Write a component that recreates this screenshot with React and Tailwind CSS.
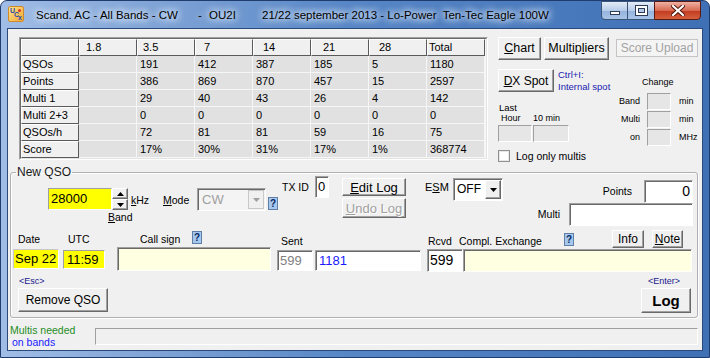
import React from 'react';

const raised = 'bg-[#f0f0f0] border border-t-white border-l-white border-r-[#696969] border-b-[#696969] shadow-[inset_-1px_-1px_0_#a0a0a0]';
const sunken = 'border border-t-[#a0a0a0] border-l-[#a0a0a0] border-r-white border-b-white shadow-[inset_1px_1px_0_#696969]';
const lite = 'bg-[#e6e6e6] border border-t-[#a0a0a0] border-l-[#a0a0a0] border-r-white border-b-white';

const Help = ({ className = '' }) => (
  <div className={`w-[10px] h-[13px] bg-[#a6c8ee] border border-[#5f7fa6] flex items-center justify-center text-[10px] font-bold leading-none text-[#0b2a5e] ${className}`}>?</div>
);

const Down = ({ color = '#000' }) => (
  <svg width="7" height="4" viewBox="0 0 7 4"><path d="M0 0h7L3.5 4z" fill={color} /></svg>
);

const Up = () => (
  <svg width="7" height="4" viewBox="0 0 7 4"><path d="M0 4h7L3.5 0z" fill="#000" /></svg>
);

const header = ['', '1.8', '3.5', '7', '14', '21', '28', 'Total'];
const headPad = [0, 6, 5, 8, 9, 11, 9, 1];
const rows = [
  ['QSOs', '', '191', '412', '387', '185', '5', '1180'],
  ['Points', '', '386', '869', '870', '457', '15', '2597'],
  ['Multi 1', '', '29', '40', '43', '26', '4', '142'],
  ['Multi 2+3', '', '0', '0', '0', '0', '0', '0'],
  ['QSOs/h', '', '72', '81', '81', '59', '16', '75'],
  ['Score', '', '17%', '30%', '31%', '17%', '1%', '368774'],
];

const fixedCell = 'w-[58px] h-[17px] shrink-0 bg-[#f0f0f0] border border-t-white border-l-white border-r-[#5a5a5a] border-b-[#5a5a5a] flex items-center';
const dataCell = 'w-[58px] h-[17px] shrink-0 bg-[#e1e1e1] border-r border-b border-r-[#f6f6f6] border-b-[#f6f6f6] flex items-center pl-[3px]';

function ScoreTable() {
  return (
    <div className="ml-[11px] mt-[8px] w-[469px] h-[123px] border border-t-[#a0a0a0] border-l-[#a0a0a0] border-r-white border-b-white">
      <div className="w-full h-full border border-t-[#696969] border-l-[#696969] border-r-[#e3e3e3] border-b-[#e3e3e3] bg-[#f7f7f7] text-[11px] leading-none">
        <div className="flex">
          {header.map((h, i) => (
            <div key={i} className={fixedCell} style={{ paddingLeft: headPad[i] }}>{h}</div>
          ))}
        </div>
        {rows.map((r) => (
          <div key={r[0]} className="flex">
            <div className={`${fixedCell} pl-[1px]`}>{r[0]}</div>
            {r.slice(1).map((v, i) => (
              <div key={i} className={dataCell}>{v}</div>
            ))}
          </div>
        ))}
      </div>
    </div>
  );
}

function RightPanel() {
  return (
    <div className="ml-[10px] mt-[8px] w-[202px]">
      <div className="flex items-start h-[23px]">
        <div className={`${raised} w-[43px] h-[23px] flex items-center justify-center text-[12.5px]`}><span><u>C</u>hart</span></div>
        <div className={`${raised} ml-[3px] w-[65px] h-[23px] flex items-center justify-center text-[12.5px]`}><span>Multip<u>l</u>iers</span></div>
        <div className="ml-[7px] mt-[2px] w-[82px] h-[18px] border border-[#c4c4c4] bg-[#f4f4f4] flex items-center justify-center text-[12px] text-[#a3a3a3]">Score Upload</div>
      </div>
      <div className="flex">
        <div className="w-[120px]">
          <div className="mt-[9px] flex items-start">
            <div className={`${raised} w-[56px] h-[23px] flex items-center justify-center text-[12px]`}><span><u>D</u>X Spot</span></div>
            <div className="ml-[4px] text-[9.5px] leading-[12px] text-[#1c1cb0] whitespace-nowrap">
              <div>Ctrl+I:</div>
              <div>Internal spot</div>
            </div>
          </div>
          <div className="mt-[10px] pl-[1px] text-[9.5px] leading-[10px]">Last</div>
          <div className="flex text-[9px] leading-[10px]">
            <div className="pl-[3px] w-[35px]">Hour</div>
            <div>10 min</div>
          </div>
          <div className="mt-[2px] flex gap-[1px]">
            <div className={`${lite} w-[34px] h-[17px]`} />
            <div className={`${lite} w-[36px] h-[17px]`} />
          </div>
          <div className="mt-[8px] flex items-center">
            <div className="w-[12px] h-[12px] bg-white border border-[#8e8f8f] shadow-[inset_0_0_0_1px_#e8e8e8]" />
            <div className="ml-[6px] text-[10.5px] leading-[12px] whitespace-nowrap">Log only multis</div>
          </div>
        </div>
        <div className="w-[82px]">
          <div className="mt-[17px] pl-[24px] text-[9px] leading-[11px]">Change</div>
          <div className="mt-[5px] flex flex-col gap-[1px] text-[9px]">
            {[['Band', 'min'], ['Multi', 'min'], ['on', 'MHz']].map(([l, u]) => (
              <div key={l} className="flex items-center h-[17px]">
                <div className="w-[22px] text-right">{l}</div>
                <div className={`${lite} ml-[7px] w-[24px] h-[17px]`} />
                <div className="ml-[8px]">{u}</div>
              </div>
            ))}
          </div>
        </div>
      </div>
    </div>
  );
}

function NewQso() {
  return (
    <fieldset className="ml-[2px] mt-[5px] w-[688px] h-[151px] border border-[#b0b0b0] rounded-[3px] shadow-[inset_1px_1px_0_#fff,1px_1px_0_#fff]">
      <legend className="ml-[5px] px-[1px] text-[12px] leading-[10px] text-[#1a1a1a]">New QSO</legend>
      <div className="flex flex-col h-[140px] text-[10.5px] leading-[13px]">
        {/* row A */}
        <div className="flex items-start h-[50px] shrink-0">
          <div className="ml-[37px] mt-[11px] w-[115px] flex flex-col">
            <div className="flex items-start">
              <div className="w-[64px] h-[22px] bg-[#ffff00] border border-t-[#a0a0a0] border-l-[#a0a0a0] border-r-white border-b-white text-[13px] leading-none pt-[3px] pl-[2px]">28000</div>
              <div className="w-[16px] h-[22px] flex flex-col">
                <div className={`${raised} h-[11px] flex items-center justify-center`}><Up /></div>
                <div className={`${raised} h-[11px] flex items-center justify-center`}><Down /></div>
              </div>
              <div className="ml-[3px] mt-[6px]"><u>k</u>Hz</div>
            </div>
            <div className="ml-[60px] mt-[1px]"><u>B</u>and</div>
          </div>
          <div className="mt-[17px] w-[34px]"><u>M</u>ode</div>
          <div className={`${sunken} mt-[11px] w-[69px] h-[23px] bg-[#f4f4f4] flex items-center`}>
            <div className="flex-1 pl-[4px] text-[13px] text-[#a0a0a0]">CW</div>
            <div className="w-[16px] h-[19px] mr-[1px] border border-[#c8c8c8] bg-[#f0f0f0] flex items-center justify-center"><Down color="#a0a0a0" /></div>
          </div>
          <Help className="ml-[2px] mt-[20px]" />
          <div className="ml-[4px] mt-[4px] w-[33px] whitespace-nowrap">TX ID</div>
          <div className={`${sunken} -mt-[1px] w-[14px] h-[22px] bg-white text-[13px] leading-none pt-[3px] pl-[2px]`}>0</div>
          <div className="ml-[13px] w-[64px] flex flex-col text-[13px]">
            <div className={`${raised} mt-[1px] h-[18px] flex items-center justify-center`}><span><u>E</u>dit Log</span></div>
            <div className={`${raised} mt-[2px] h-[20px] flex items-center justify-center text-[#a0a0a0] [text-shadow:1px_1px_0_#fff]`}><span><u>U</u>ndo Log</span></div>
          </div>
          <div className="ml-[19px] mt-[4px] w-[28px] text-[11px]">E<u>S</u>M</div>
          <div className={`${sunken} mt-[1px] w-[50px] h-[23px] bg-white flex items-center`}>
            <div className="flex-1 pl-[3px] text-[12px]">OFF</div>
            <div className={`${raised} w-[16px] h-[19px] mr-[1px] flex items-center justify-center`}><Down /></div>
          </div>
          <div className="ml-auto mr-[4px] mt-[3px] flex flex-col items-end">
            <div className="flex items-center">
              <div>Points</div>
              <div className={`${sunken} ml-[12px] w-[49px] h-[23px] bg-white text-right pr-[2px] text-[14px] leading-[20px]`}>0</div>
            </div>
            <div className="flex items-center">
              <div>Multi</div>
              <div className={`${sunken} ml-[9px] w-[124px] h-[23px] bg-white`} />
            </div>
          </div>
        </div>

        {/* row B */}
        <div className="flex items-start h-[45px] shrink-0">
          <div className="ml-[2px] w-[46px]">
            <div className="mt-[6px] pl-[5px]">Date</div>
            <div className="mt-[3px] h-[20px] bg-[#ffff00] border border-t-[#c8c8c8] border-l-[#c8c8c8] border-r-white border-b-white text-[13px] leading-[18px] pl-[1px]">Sep 22</div>
          </div>
          <div className="ml-[4px] w-[42px]">
            <div className="mt-[6px] pl-[5px]">UTC</div>
            <div className="mt-[4px] h-[19px] bg-[#ffff00] border border-t-[#a0a0a0] border-l-[#a0a0a0] border-r-white border-b-white text-[13px] leading-[18px] pl-[3px]">11:59</div>
          </div>
          <div className="ml-[12px] w-[154px]">
            <div className="mt-[4px] flex items-start h-[13px]">
              <div className="w-[75px] pl-[23px] mt-[2px] whitespace-nowrap">Call sign</div>
              <Help />
            </div>
            <div className={`${sunken} mt-[3px] h-[24px] bg-[#ffffe1]`} />
          </div>
          <div className="ml-[6px]">
            <div className="mt-[8px] pl-[4px]">Sent</div>
            <div className="mt-[2px] flex">
              <div className={`${sunken} w-[36px] h-[21px] bg-white text-[13px] leading-[19px] pl-[2px] text-[#808080]`}>599</div>
              <div className={`${sunken} ml-[2px] w-[106px] h-[21px] bg-white text-[13px] leading-[19px] pl-[3px] text-[#1a1aff]`}>1181</div>
            </div>
          </div>
          <div className="ml-[6px] w-[265px]">
            <div className="mt-[3px] flex items-start h-[18px]">
              <div className="w-[32px] pl-[1px] mt-[5px]">Rcvd</div>
              <div className="w-[105px] mt-[5px] whitespace-nowrap">Compl. Exchange</div>
              <Help className="mt-[3px]" />
              <div className={`${raised} ml-[38px] w-[32px] h-[18px] flex items-center justify-center text-[12px]`}>Info</div>
              <div className={`${raised} ml-[8px] w-[31px] h-[18px] flex items-center justify-center text-[12px]`}><span><u>N</u>ote</span></div>
            </div>
            <div className="mt-[1px] flex">
              <div className={`${sunken} w-[36px] h-[23px] bg-white text-[14px] leading-[21px] pl-[2px]`}>599</div>
              <div className={`${sunken} w-[229px] h-[23px] bg-[#ffffe1]`} />
            </div>
          </div>
        </div>

        {/* row C */}
        <div className="flex justify-between flex-1">
          <div className="ml-[7px] flex flex-col items-start">
            <div className="mt-[5px] pl-[1px] text-[9px] leading-[9px] text-[#1a1a8c]">&lt;Esc&gt;</div>
            <div className={`${raised} mt-[2px] w-[90px] h-[24px] flex items-center justify-center text-[12px]`}>Remove QSO</div>
          </div>
          <div className="mr-[6px] flex flex-col items-end">
            <div className="mt-[5px] pr-[11px] text-[9px] leading-[9px] text-[#1a1a8c]">&lt;Enter&gt;</div>
            <div className={`${raised} mt-[2px] w-[50px] h-[25px] flex items-center justify-center text-[15px] font-bold`}>Log</div>
          </div>
        </div>
      </div>
    </fieldset>
  );
}

export default function App() {
  return (
    <div className="w-[710px] h-[358px] bg-white font-['Liberation_Sans',Arial,sans-serif] text-black">
      <div className="w-[710px] h-[358px] flex flex-col rounded-t-[7px] border border-[#1f3c6c] bg-[linear-gradient(90deg,#a0bde6_0%,#7fa3d6_22%,#5686c6_50%,#3f70b6_100%)] px-[6px] pb-[6px]">
        {/* title bar */}
        <div className="h-[27px] flex items-start shrink-0">
          <div className="relative ml-[1px] mt-[5px] w-[16px] h-[16px] rounded-[2px] bg-[linear-gradient(135deg,#fde28a,#f4a83a)] border border-[#d08a2a] overflow-hidden">
            <span className="absolute left-[1px] top-[-1px] text-[7px] font-bold text-[#2a4aa8]">U</span>
            <span className="absolute left-[5px] top-[3px] text-[7px] font-bold text-[#2a4aa8]">C</span>
            <span className="absolute left-[9px] top-[6px] text-[7px] font-bold text-[#2a4aa8]">x</span>
            <span className="absolute right-[2px] top-[2px] w-[3px] h-[3px] rounded-full bg-[#d83a2a]" />
          </div>
          <div className="ml-[12px] mt-[7px] flex text-[11.5px] leading-[14px] whitespace-nowrap [text-shadow:0_0_8px_#dfeafa,0_0_8px_#dfeafa,0_0_6px_#dfeafa]">
            <span className="w-[162px]">Scand. AC - All Bands - CW</span>
            <span className="w-[11px]">-</span>
            <span className="w-[53px]">OU2I</span>
            <span>21/22 september 2013 - Lo-Power&nbsp; Ten-Tec Eagle 100W</span>
          </div>
          <div className="ml-auto mr-[2px] flex h-[19px]">
            <div className="w-[27px] h-[19px] rounded-bl-[4px] border border-[#3c5378] bg-[linear-gradient(180deg,#e3ecf7,#b8cde9_50%,#93b2dd_51%,#a9c4e8)] flex items-end justify-center pb-[4px]">
              <div className="w-[10px] h-[4px] bg-white border border-[#2e3d55]" />
            </div>
            <div className="w-[26px] h-[19px] border-y border-[#3c5378] bg-[linear-gradient(180deg,#e3ecf7,#b8cde9_50%,#93b2dd_51%,#a9c4e8)] flex items-center justify-center">
              <div className="w-[11px] h-[9px] border-2 border-white shadow-[0_0_0_1px_#2e3d55,inset_0_0_0_1px_#2e3d55] bg-[#b5c9e4]" />
            </div>
            <div className="w-[47px] h-[19px] rounded-br-[4px] border border-[#5a1a10] bg-[linear-gradient(180deg,#eeb2a4,#d86a52_50%,#c23a20_51%,#d5603e)] flex items-center justify-center">
              <svg width="14" height="11" viewBox="0 0 14 11">
                <path d="M2 1l10 9M12 1L2 10" stroke="#4a1208" strokeWidth="4" strokeLinecap="square" />
                <path d="M2 1l10 9M12 1L2 10" stroke="#fff" strokeWidth="2.2" strokeLinecap="square" />
              </svg>
            </div>
          </div>
        </div>

        {/* client area */}
        <div className="flex-1 min-h-0 bg-[#f0f0f0] border border-[#2a4a7c] flex flex-col">
          <div className="h-[133px] flex items-start shrink-0">
            <ScoreTable />
            <RightPanel />
          </div>
          <NewQso />
          <div className="flex items-start">
            <div className="ml-[2px] w-[85px] mt-[6px] text-[10.5px] leading-[12px] whitespace-nowrap">
              <div className="text-[#1e8c1e]">Multis needed</div>
              <div className="pl-[2px] text-[#1a1aff]">on bands</div>
            </div>
            <div className="mt-[10px] w-[603px] h-[17px] bg-[#f0f0f0] border border-t-[#a0a0a0] border-l-[#a0a0a0] border-r-white border-b-white" />
          </div>
        </div>
      </div>
    </div>
  );
}
